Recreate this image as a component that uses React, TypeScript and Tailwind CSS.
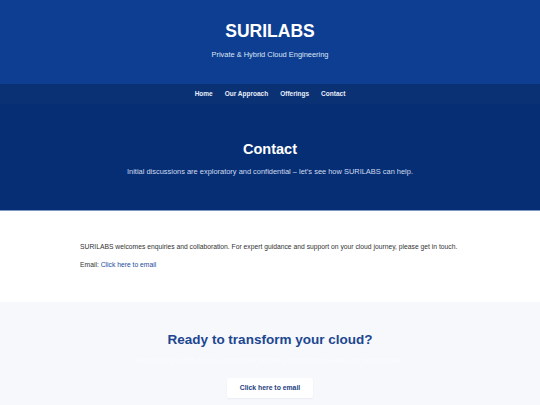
import React from 'react';

const navLinks = ['Home', 'Our Approach', 'Offerings', 'Contact'];

export default function App() {
  return (
    <div className="min-h-screen w-full bg-white font-['Liberation_Sans',Arial,sans-serif]">
      {/* Header */}
      <header className="bg-[#0d3e92] pt-[20px] pb-[24px] text-center text-white">
        <h1 className="text-[17.5px] font-bold leading-[22px]">SURILABS</h1>
        <p className="mt-[8px] text-[7.45px] leading-[10px] text-[#dbe5f5]">Private &amp; Hybrid Cloud Engineering</p>
      </header>

      {/* Nav */}
      <nav className="flex h-[20px] items-center justify-center gap-[12px] bg-[#0a3174]">
        {navLinks.map(link => (
          <a key={link} className="text-[6.5px] font-bold leading-[10px] text-[#e8eef8]">
            {link}
          </a>
        ))}
      </nav>

      {/* Hero */}
      <section className="flex flex-col items-center bg-[#052e74] pt-[36px] pb-[33px] text-center">
        <h2 className="text-[14.5px] font-bold leading-[19px] text-white">Contact</h2>
        <p className="mt-[8px] text-[7.45px] leading-[10px] text-[#d0dbef]">
          Initial discussions are exploratory and confidential – let’s see how SURILABS can help.
        </p>
      </section>

      {/* Body */}
      <section className="border-t border-[#7d97c2] px-[80px] pt-[31px] pb-[32px] text-[6.75px] leading-[10px] text-[#333]">
        <p className="whitespace-nowrap">
          SURILABS welcomes enquiries and collaboration. For expert guidance and support on your cloud journey, please get in touch.
        </p>
        <p className="mt-[8px]">
          Email: <a className="text-[#1a4a9c]">Click here to email</a>
        </p>
      </section>

      {/* CTA */}
      <section className="flex flex-col items-center bg-[#f6f8fc] pt-[29px] pb-[20px] text-center">
        <h2 className="text-[13.5px] font-bold leading-[17px] text-[#1c4690]">Ready to transform your cloud?</h2>
        <p className="mt-[8px] text-[6.75px] leading-[10px] text-[#fbfcfe]">
          Reach out to SURILABS to explore how tailored solutions can elevate your infrastructure.
        </p>
        <a className="mt-[12px] flex h-[20px] w-[86px] items-center justify-center rounded-[2px] bg-white text-[6.85px] font-bold text-[#23417d] shadow-[0_1px_2px_rgba(20,40,90,0.06)]">
          Click here to email
        </a>
      </section>
    </div>
  );
}
